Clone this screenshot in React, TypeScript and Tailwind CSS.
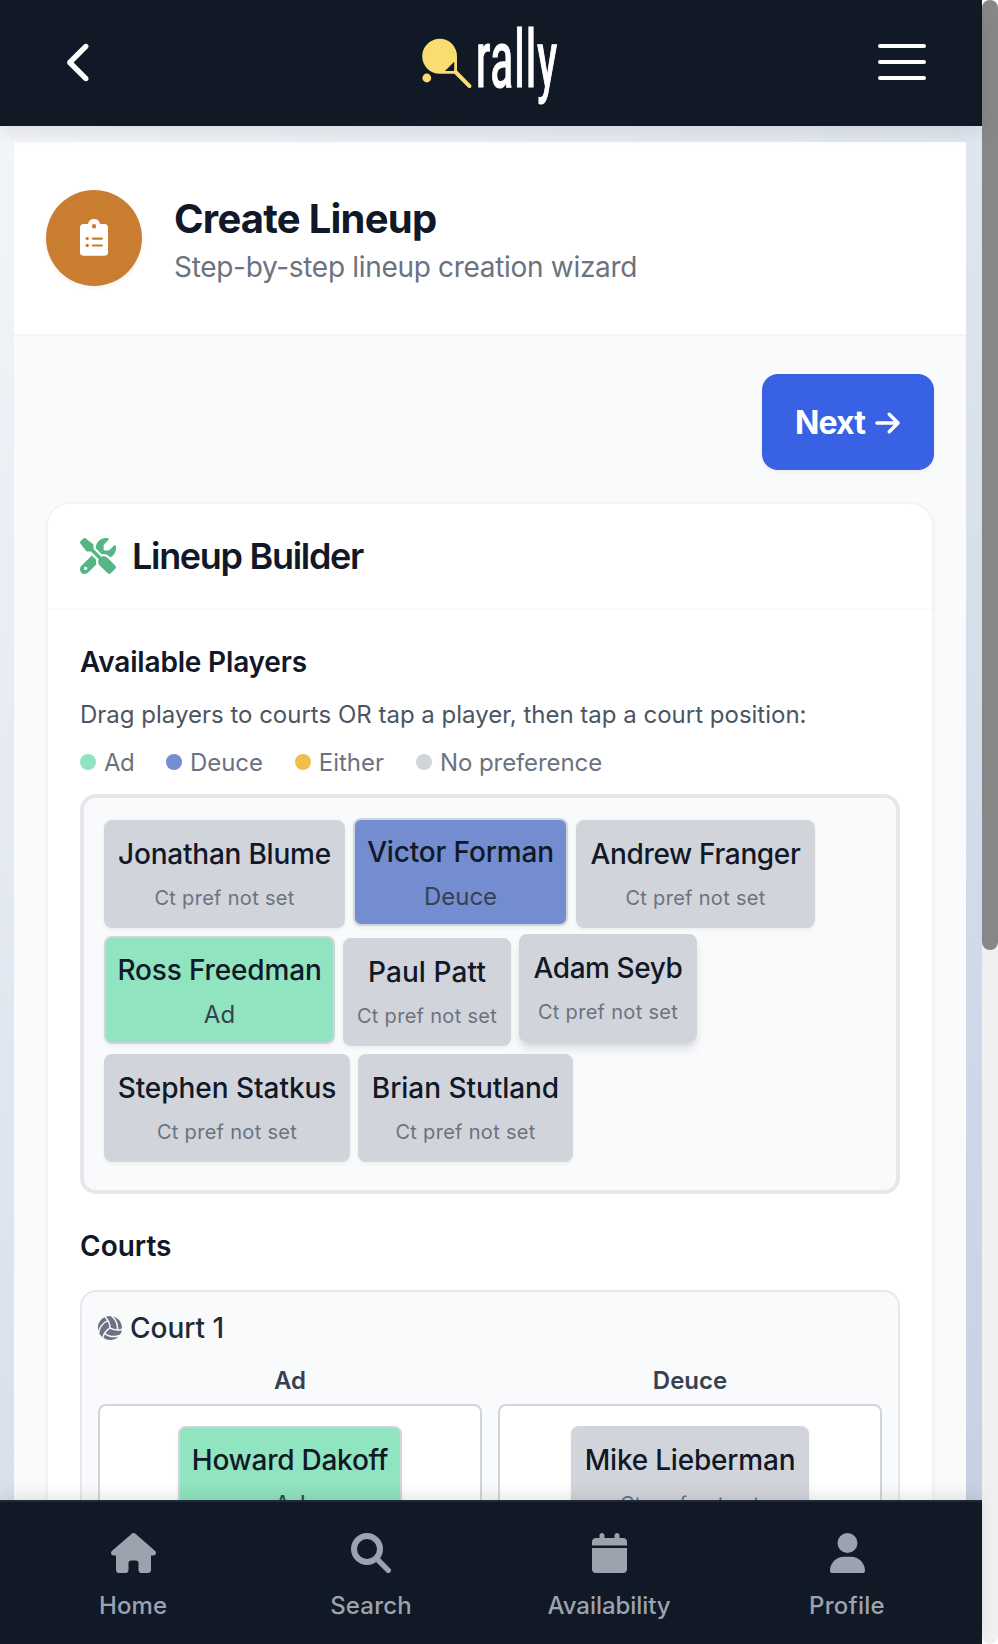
import type { ReactNode } from "react";
import {
  FaArrowRight,
  FaCalendar,
  FaChevronLeft,
  FaHouse,
  FaScrewdriverWrench,
  FaUser,
  FaVolleyball,
} from "react-icons/fa6";

type Preference = "Ad" | "Deuce" | null;

type Player = {
  name: string;
  pref: Preference;
  /** Width and tracking of the chip. */
  fit: string;
  raised?: boolean;
};

const playerRows: Player[][] = [
  [
    { name: "Jonathan Blume", pref: null, fit: "mt-0.5 w-[241px] tracking-[-0.23px]" },
    { name: "Victor Forman", pref: "Deuce", fit: "w-[215px] tracking-[-0.16px]" },
    { name: "Andrew Franger", pref: null, fit: "mt-0.5 w-[239px] tracking-[-0.35px]" },
  ],
  [
    { name: "Ross Freedman", pref: "Ad", fit: "w-[231px] tracking-[-0.15px]" },
    { name: "Paul Patt", pref: null, fit: "mt-0.5 w-[168px] tracking-[0.11px]" },
    { name: "Adam Seyb", pref: null, fit: "-mt-0.5 w-[178px] tracking-[-0.42px]", raised: true },
  ],
  [
    { name: "Stephen Statkus", pref: null, fit: "w-[246px] tracking-[-0.05px]" },
    { name: "Brian Stutland", pref: null, fit: "w-[215px] tracking-[-0.05px]" },
  ],
];

const legend = [
  { label: "Ad", dot: "bg-[#90e4c0]", text: "tracking-[-0.6px]" },
  { label: "Deuce", dot: "bg-[#748dd0]", text: "tracking-[-0.1px]" },
  { label: "Either", dot: "bg-[#f1be4a]", text: "tracking-[0px]" },
  { label: "No preference", dot: "bg-[#d1d5db]", text: "tracking-[-0.1px]" },
];

function Logo() {
  return (
    <svg viewBox="421 14 140 96" className="h-24 w-[140px] shrink-0" role="img" aria-label="rally">
      <g fill="#f9dd70">
        <path
          fillRule="evenodd"
          d="M439.7 38.8A17.3 17.3 0 0 1 457 56V73.8H439.7A17.5 17.5 0 0 1 439.7 38.8ZM454.2 61.8L445 71H454.2Z"
        />
        <circle cx="426.8" cy="78" r="4.4" />
      </g>
      <path d="M455.5 72L469.5 86.2" stroke="#f9dd70" strokeWidth="4" strokeLinecap="round" />
      <text
        x="475.6"
        y="87.2"
        textLength="82"
        lengthAdjust="spacingAndGlyphs"
        fill="#ffffff"
        stroke="#ffffff"
        strokeWidth="1.2"
        className="font-['Roboto_Condensed'] text-[80px]"
      >
        rally
      </text>
    </svg>
  );
}

function ClipboardIcon() {
  return (
    <svg viewBox="0 0 28 37" className="-mt-px h-[37px] w-7" fill="currentColor" fillRule="evenodd">
      <path d="M8 5a6.1 6.1 0 0 1 12 0H24.5A3.5 3.5 0 0 1 28 8.5V33.2a3.5 3.5 0 0 1-3.5 3.5H3.5A3.5 3.5 0 0 1 0 33.2V8.5A3.5 3.5 0 0 1 3.5 5ZM14 5.1a2.2 2.2 0 1 0 0 4.4 2.2 2.2 0 1 0 0-4.4ZM7.2 17.9a1.7 1.7 0 1 0 0 3.4 1.7 1.7 0 1 0 0-3.4ZM7.2 24.8a1.7 1.7 0 1 0 0 3.4 1.7 1.7 0 1 0 0-3.4ZM12.9 18.5a1.1 1.1 0 0 0 0 2.2H21.9a1.1 1.1 0 0 0 0-2.2ZM12.9 25.4a1.1 1.1 0 0 0 0 2.2H21.9a1.1 1.1 0 0 0 0-2.2Z" />
    </svg>
  );
}

function SearchIcon() {
  return (
    <svg viewBox="0 0 40 40" className="size-10" fill="none" stroke="currentColor" strokeLinecap="round">
      <circle cx="16" cy="16" r="13" strokeWidth="6" />
      <path d="M26 26L37.3 37.3" strokeWidth="5.4" />
    </svg>
  );
}

function TopBar() {
  return (
    <header className="z-10 flex h-[126px] shrink-0 items-center justify-between bg-[#111826] pr-14 pb-0.5 pl-[67px] shadow-[0_10px_16px_-2px_rgba(0,0,0,0.08)]">
      <button aria-label="Back" className="w-[37px] text-white">
        <FaChevronLeft className="h-[43px] w-[27px]" />
      </button>
      <Logo />
      <button aria-label="Menu" className="flex flex-col gap-3">
        <span className="h-1 w-12 rounded-xs bg-white" />
        <span className="h-1 w-12 rounded-xs bg-white" />
        <span className="h-1 w-12 rounded-xs bg-white" />
      </button>
    </header>
  );
}

function PlayerChip({ player }: { player: Player }) {
  const { pref, name, fit, raised } = player;
  const tone =
    pref === "Ad" ? "bg-[#90e4c0]" : pref === "Deuce" ? "bg-[#748dd0]" : "bg-[#d1d5db]";
  const shadow = raised
    ? "shadow-[0_8px_12px_-2px_rgba(0,0,0,0.12),0_4px_6px_-2px_rgba(0,0,0,0.08)]"
    : "shadow-[0_2px_4px_rgba(0,0,0,0.05)]";
  return (
    <div
      className={`flex h-[108px] shrink-0 flex-col items-center rounded-lg border-2 border-[#d1d5db] pt-3 whitespace-nowrap ${tone} ${shadow} ${fit}`}
    >
      <span className="text-[28px] leading-10 font-medium text-[#111827]">{name}</span>
      {pref ? (
        <span className="mt-[9px] text-[24px] leading-8 tracking-[0px] text-[#374151]">{pref}</span>
      ) : (
        <span className="mt-2 text-[20px] leading-8 tracking-[0.3px] text-[#6b7280]">
          Ct pref not set
        </span>
      )}
    </div>
  );
}

function CourtSlot({ side, children }: { side: string; children: ReactNode }) {
  return (
    <div>
      <div className="text-center text-[24px] leading-8 font-semibold text-[#374151]">{side}</div>
      <div className="mt-[7px] flex h-[152px] justify-center rounded-lg border-2 border-[#d1d5db] bg-white pt-5">
        {children}
      </div>
    </div>
  );
}

function LineupBuilder() {
  return (
    <section className="rounded-3xl border-2 border-[#f3f4f6] bg-white shadow-[0_2px_4px_rgba(0,0,0,0.04)]">
      <div className="flex h-[106px] items-center gap-4 border-b-2 border-[#f9fafb] px-8">
        <FaScrewdriverWrench className="size-9 text-[#54b685]" />
        <h2 className="text-[36px] font-semibold tracking-[-1.31px] text-[#111827]">Lineup Builder</h2>
      </div>
      <div className="p-8">
        <h3 className="text-[28px] leading-10 font-semibold tracking-[-0.18px] text-[#111827]">
          Available Players
        </h3>
        <p className="mt-[17px] text-[24px] leading-8 whitespace-nowrap text-[#4b5563]">
          Drag players to courts OR tap a player, then tap a court position:
        </p>
        <div className="mt-4 flex gap-8">
          {legend.map((item) => (
            <div key={item.label} className="flex items-center gap-2 text-[24px] leading-8 text-[#6b7280]">
              <span className={`mb-0.5 size-4 rounded-full ${item.dot}`} />
              <span className={item.text}>{item.label}</span>
            </div>
          ))}
        </div>
        <div className="mt-[15px] flex h-[400px] flex-col gap-2 rounded-2xl border-4 border-[#e5e7eb] bg-[#f9fafb] p-5">
          {playerRows.map((row, index) => (
            <div key={index} className="flex h-[110px] items-start gap-2">
              {row.map((player) => (
                <PlayerChip key={player.name} player={player} />
              ))}
            </div>
          ))}
        </div>

        <h3 className="mt-8 text-[28px] leading-10 font-semibold text-[#111827]">Courts</h3>
        <div className="mt-6 rounded-2xl border-2 border-[#e5e7eb] bg-[#f9fafb] p-4">
          <div className="flex items-center gap-2">
            <FaVolleyball className="size-6 text-[#6b7280]" />
            <h4 className="text-[28px] leading-10 font-medium text-[#1f2937]">Court 1</h4>
          </div>
          <div className="mt-[17px] grid grid-cols-2 gap-4">
            <CourtSlot side="Ad">
              <PlayerChip
                player={{ name: "Howard Dakoff", pref: "Ad", fit: "w-[224px] tracking-[-0.25px]" }}
              />
            </CourtSlot>
            <CourtSlot side="Deuce">
              <PlayerChip
                player={{ name: "Mike Lieberman", pref: null, fit: "w-[238px] tracking-[-0.2px]" }}
              />
            </CourtSlot>
          </div>
        </div>
      </div>
    </section>
  );
}

function NavItem({ icon, label, fit }: { icon: ReactNode; label: string; fit: string }) {
  return (
    <a className="flex flex-col items-center gap-[17px] pt-[31px] text-[#9ca3af]">
      {icon}
      <span className={`text-[24px] leading-8 font-medium ${fit}`}>{label}</span>
    </a>
  );
}

function BottomNav() {
  return (
    <nav className="z-10 grid h-36 shrink-0 grid-cols-4 border-t-2 border-[#1f2937] bg-[#111826] pr-4 pl-3.5 shadow-[0_-6px_16px_-2px_rgba(0,0,0,0.1)]">
      <NavItem icon={<FaHouse className="h-10 w-[45px]" />} label="Home" fit="tracking-[0.1px]" />
      <NavItem icon={<SearchIcon />} label="Search" fit="tracking-[0.17px]" />
      <NavItem icon={<FaCalendar className="h-10 w-[35px]" />} label="Availability" fit="tracking-[-0.05px]" />
      <NavItem icon={<FaUser className="h-10 w-[35px]" />} label="Profile" fit="tracking-[0.25px]" />
    </nav>
  );
}

export default function App() {
  return (
    <div className="flex h-[1644px] w-[998px] overflow-hidden bg-white font-[Inter,sans-serif]">
      <div className="flex w-[982px] flex-col bg-[linear-gradient(135deg,#f5f7fa_0%,#c3cfe2_100%)]">
        <TopBar />
        <main className="min-h-0 flex-1 overflow-hidden pt-4 pr-4 pl-3.5">
          <div className="flex h-[194px] items-start gap-8 border-b-2 border-[#f3f4f6] bg-white px-8 pt-12">
            <div className="flex size-24 items-center justify-center rounded-full bg-[#c97d30] text-white shadow-[0_2px_4px_rgba(0,0,0,0.06)]">
              <ClipboardIcon />
            </div>
            <div className="mt-1">
              <h1 className="text-[40px] leading-[50px] font-bold tracking-[-0.75px] text-[#111827]">
                Create Lineup
              </h1>
              <p className="mt-[3px] text-[28px] leading-10 tracking-[-0.31px] text-[#6b7280]">
                Step-by-step lineup creation wizard
              </p>
            </div>
          </div>
          <div className="bg-[#f9fafb] px-8 pt-[38px]">
            <div className="mb-8 flex justify-end">
              <button className="flex h-24 w-[172px] items-center gap-2.5 rounded-2xl bg-[#3862e3] pt-px pl-[33px] text-[32px] font-bold text-white shadow-[0_2px_4px_rgba(0,0,0,0.06)]">
                <span className="tracking-[-0.9px]">Next</span>
                <FaArrowRight className="h-7 w-[25px]" />
              </button>
            </div>
            <LineupBuilder />
          </div>
        </main>
        <BottomNav />
      </div>
      <div className="w-4 rounded-lg bg-[#f0f0f0]">
        <div className="h-[950px] rounded-lg bg-[#878787]" />
      </div>
    </div>
  );
}
